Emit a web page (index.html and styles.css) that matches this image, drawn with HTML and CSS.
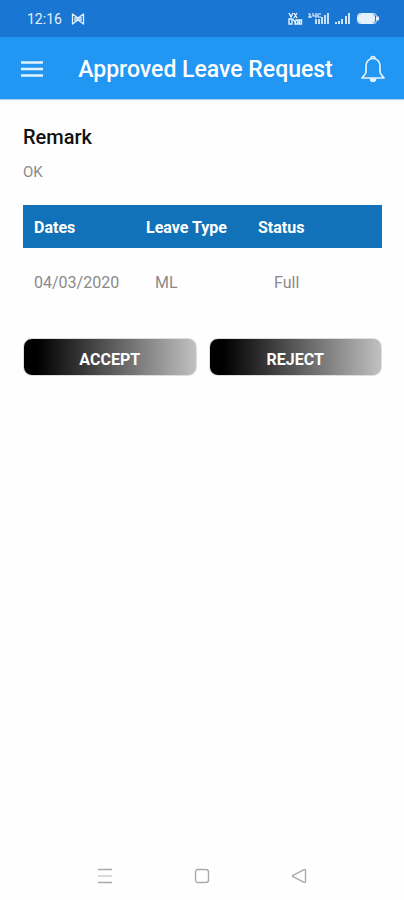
FILE: index.html
```
<!DOCTYPE html>
<html lang="en">
<head>
<meta charset="utf-8">
<meta name="viewport" content="width=device-width, initial-scale=1">
<title>Approved Leave Request</title>
<link rel="stylesheet" href="styles.css">
</head>
<body>
<div class="status-bar">
  <span class="clock">12:16</span>
  <svg class="notice" width="14" height="12" viewBox="0 0 14 12" fill="none" stroke="currentColor" stroke-width="1.300" stroke-linejoin="round"><path d="M1.500 1v10L7 7l5.500 4V1L7 5zM4 4v4M10 4v4M5 7.500l4-3M5 4.500l4 3"/></svg>
  <svg class="signals" width="92" height="14" viewBox="0 0 92 14" fill="none" stroke="currentColor">
    <path stroke-width="1.400" d="M1 1l2 4 2-4M6 1l3 5M9 1L6 6M1 7v5h3V7zM5 7l3 5M8 8h2v4H7zM11.500 8h2v4h-2z"/>
    <path stroke-width="1.200" d="M20 2h2v4M20 5h4M25 1v3h3M28 1v5M33 2h-3v3h3"/>
    <path stroke-width="1.700" d="M28 7v5M31 7v5M34 5v7M37 3v9M40 1v11"/>
    <path stroke-width="1.800" d="M48 10v2M51 9v3M54 7v5M58 4v8M61 1v11"/>
    <rect x="69.500" y="1.500" width="19" height="10" rx="3"/>
    <rect x="70.500" y="2.500" width="16" height="8" rx="2" fill="currentColor"/>
    <path stroke-width="2" d="M90 4.500v4"/>
  </svg>
</div>
<header class="app-bar">
  <button class="icon-button" aria-label="Menu"><svg width="22" height="18" viewBox="0 0 22 18" stroke="currentColor" stroke-width="2.400"><path d="M0 2.500h22M0 9h22M0 15.500h22"/></svg></button>
  <h1>Approved Leave Request</h1>
  <button class="icon-button" aria-label="Notifications"><svg width="26" height="28" viewBox="0 0 26 28" fill="none" stroke="currentColor" stroke-width="1.700" stroke-linejoin="round"><path d="M11 3.500a2 2 0 0 1 4 0M13 3.500c-4.500 0-7 3.500-7 8v5.500c0 2-2 3.500-4 6h22c-2-2.500-4-4-4-6v-5.500c0-4.500-2.500-8-7-8z"/><path fill="currentColor" d="M10.500 24h5c0 3-5 3-5 0z"/></svg></button>
</header>
<main>
  <h2>Remark</h2>
  <p>OK</p>
  <table>
    <thead><tr><th scope="col">Dates</th><th scope="col">Leave Type</th><th scope="col">Status</th></tr></thead>
    <tbody><tr><td>04/03/2020</td><td class="type">ML</td><td class="status">Full</td></tr></tbody>
  </table>
  <div class="actions">
    <button class="action">ACCEPT</button>
    <button class="action">REJECT</button>
  </div>
</main>
<nav class="system-nav" aria-label="System">
  <button class="icon-button" aria-label="Recent apps"><svg width="16" height="16" viewBox="0 0 16 16" stroke="currentColor" stroke-width="1.400"><path d="M1 1.500h14M1 14.500h14"/><path opacity=".6" d="M1 8h14"/></svg></button>
  <button class="icon-button" aria-label="Home"><svg width="16" height="16" viewBox="0 0 16 16" fill="none" stroke="currentColor" stroke-width="1.400"><rect x="1.500" y="1.500" width="13" height="13" rx="2.500"/></svg></button>
  <button class="icon-button" aria-label="Back"><svg width="16" height="16" viewBox="0 0 16 16" fill="none" stroke="currentColor" stroke-width="1.400" stroke-linejoin="round"><path d="M2 7.300L13 1.700q1.500-.5 1.500 1v10.600q0 1.500-1.500 1L2 8.700q-1-.7 0-1.400z"/></svg></button>
</nav>
</body>
</html>
```
FILE: styles.css
```
* {
  box-sizing: border-box;
}

body {
  display: flex;
  flex-direction: column;
  min-height: 100vh;
  margin: 0;
  background: #fefefe;
  font-family: Roboto, sans-serif;
}

h1,
h2,
p {
  margin: 0;
}

svg {
  display: block;
}

button {
  border: 0;
  padding: 0;
  font-family: inherit;
}

.icon-button {
  background: none;
  color: inherit;
}

.status-bar {
  display: flex;
  align-items: center;
  gap: 9px;
  height: 37px;
  padding: 0 24px 0 27px;
  background: #1976d2;
  color: #e4f1fd;
}

.clock {
  font-size: 14px;
}

.signals {
  margin-left: auto;
}

.app-bar {
  display: flex;
  align-items: center;
  justify-content: space-between;
  height: 62px;
  padding: 2px 18px 0 21px;
  background: #2196f3;
  color: #e4f3ff;
  box-shadow: 0 1px 1px #a9d5f8;
}

.app-bar h1 {
  padding-left: 8px;
  color: #fff;
  font-size: 23px;
  font-weight: 500;
}

main {
  flex: 1;
  padding: 24px 22px 24px 23px;
}

h2 {
  color: #111;
  font-size: 20px;
  font-weight: 500;
  line-height: 28px;
}

p {
  margin-top: 10px;
  color: #8a8a8a;
  font-size: 15px;
  line-height: 22px;
}

table {
  width: 100%;
  margin-top: 22px;
  border-collapse: collapse;
  table-layout: fixed;
  font-size: 16px;
  text-align: left;
}

th,
td {
  width: 112px;
  padding: 0 0 0 11px;
}

th:last-child {
  width: auto;
}

th {
  height: 43px;
  padding-top: 2px;
  background: #1272b9;
  color: #fff;
  font-weight: 700;
}

td {
  height: 69px;
  color: #8a8a8a;
}

.type {
  padding-left: 20px;
}

.status {
  padding-left: 27px;
}

.actions {
  display: flex;
  gap: 12px;
  margin-top: 21px;
}

.action {
  flex: 1;
  height: 38px;
  border: 1px solid #dedede;
  border-radius: 9px;
  background: linear-gradient(90deg, #000 8%, #c2c2c2) border-box;
  color: #fff;
  font-size: 16px;
  font-weight: 700;
  line-height: 20px;
  padding-top: 6px;
}

.system-nav {
  display: flex;
  justify-content: center;
  gap: 81px;
  padding-bottom: 16px;
  color: #aaa;
}
```
